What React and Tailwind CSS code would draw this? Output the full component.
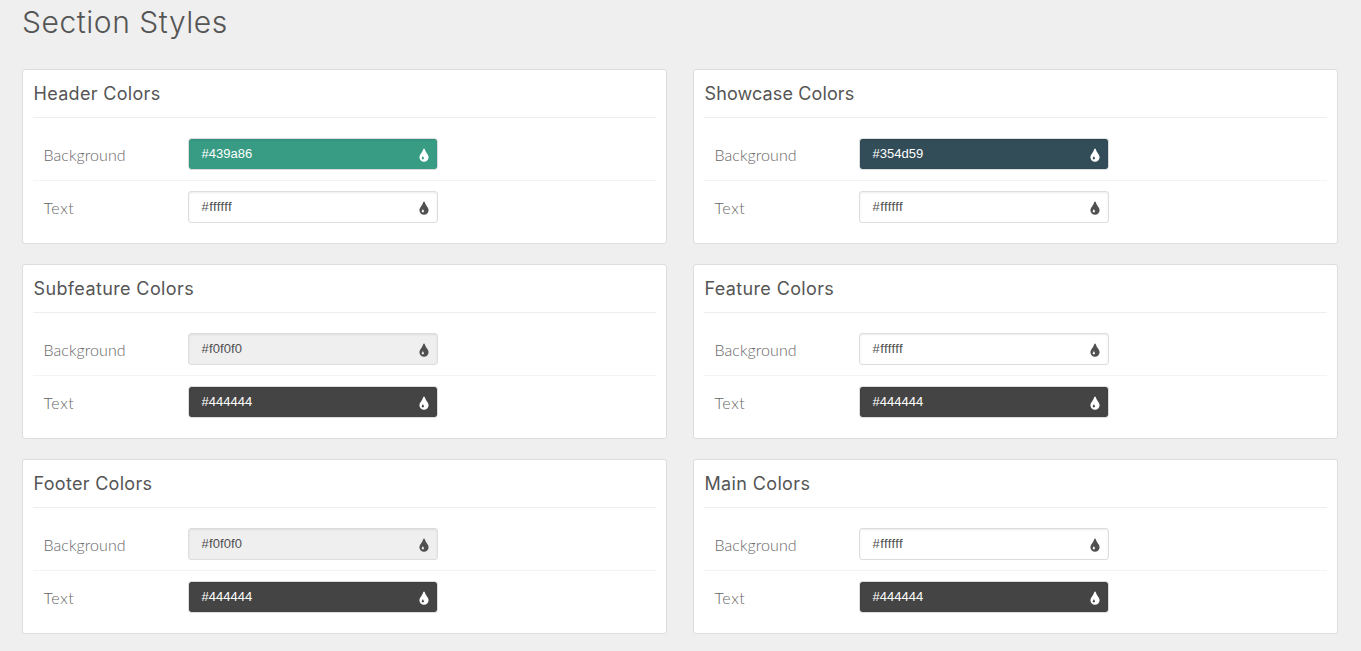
const sections = [
  { title: "Header Colors", spacing: "tracking-[0.32px]", background: "#439a86", text: "#ffffff" },
  { title: "Showcase Colors", spacing: "tracking-[0.12px]", background: "#354d59", text: "#ffffff" },
  { title: "Subfeature Colors", spacing: "tracking-[0.38px]", background: "#f0f0f0", text: "#444444" },
  { title: "Feature Colors", spacing: "tracking-[0.36px]", background: "#ffffff", text: "#444444" },
  { title: "Footer Colors", spacing: "tracking-[0.3px]", background: "#f0f0f0", text: "#444444" },
  { title: "Main Colors", spacing: "tracking-[0.36px]", background: "#ffffff", text: "#444444" },
];

const swatches = {
  "#439a86": "bg-[#389b84] text-white",
  "#354d59": "bg-[#324c58] text-white",
  "#444444": "bg-[#444444] text-white",
  "#f0f0f0": "bg-[#efefef] text-[#505050] tracking-[0.1px]",
  "#ffffff": "bg-white text-[#505050] tracking-[0.38px]",
};

function Drop() {
  return (
    <svg viewBox="0 0 1792 1792" className="mt-1 h-4 w-4 shrink-0" fill="currentColor" aria-hidden="true">
      <path d="M896 1152q0-36-20-69-1-1-15.5-22.5t-25.5-38-25-44-21-50.5q-4-16-21-16t-21 16q-7 23-21 50.5t-25 44-25.5 38-15.5 22.5q-20 33-20 69 0 53 37.5 90.5t90.5 37.5 90.5-37.5 37.5-90.5zm512-128q0 212-150 362t-362 150-362-150-150-362q0-145 81-275 6-9 62.5-90.5t101-151 99.5-178 83-201.5q9-30 34-47t51-17 51.5 17 33.5 47q28 93 83 201.5t99.5 178 101 151 62.5 90.5q81 127 81 275z" />
    </svg>
  );
}

function ColorRow({ label, value, last }) {
  return (
    <div className={`flex items-center py-2.5 pl-2.5 ${last ? "" : "border-b border-[#f3f3f3]"}`}>
      <span className={`w-[145px] pt-px pl-[0.5px] font-['Lato',sans-serif] text-base leading-6 font-light text-[#666] ${last ? "tracking-[0.6px]" : "tracking-[0.05px]"}`}>{label}</span>
      <div className={`flex h-8 w-[250px] items-center justify-between rounded-[3px] border border-[#dddddd] bg-clip-padding pr-[5.5px] pl-[12.6px] shadow-[inset_0_1px_2px_rgba(0,0,0,0.08)] ${swatches[value]}`}>
        <span className="-mt-px font-['Liberation_Sans',sans-serif] text-[13px] leading-[18px]">{value}</span>
        <Drop />
      </div>
    </div>
  );
}

function Card({ title, spacing, background, text }) {
  return (
    <section className="h-[175px] rounded-[3px] border border-[#dddddd] bg-white p-2.5">
      <h2 className={`mb-2.5 h-[38px] border-b border-[#eeeeee] pl-[0.5px] font-['Inter',sans-serif] text-[18px] leading-[27px] font-normal text-[#555] ${spacing}`}>{title}</h2>
      <ColorRow label="Background" value={background} />
      <ColorRow label="Text" value={text} last />
    </section>
  );
}

export default function App() {
  return (
    <main className="h-[651px] overflow-hidden bg-[#efefef] pr-[23px] pl-[22px]">
      <h1 className="h-[69px] font-['Inter',sans-serif] text-[30px] leading-[45px] font-[350] tracking-[0.55px] text-[#555]">Section Styles</h1>
      <div className="grid grid-cols-2 gap-x-[26px] gap-y-5">
        {sections.map((section) => (
          <Card key={section.title} {...section} />
        ))}
      </div>
    </main>
  );
}
